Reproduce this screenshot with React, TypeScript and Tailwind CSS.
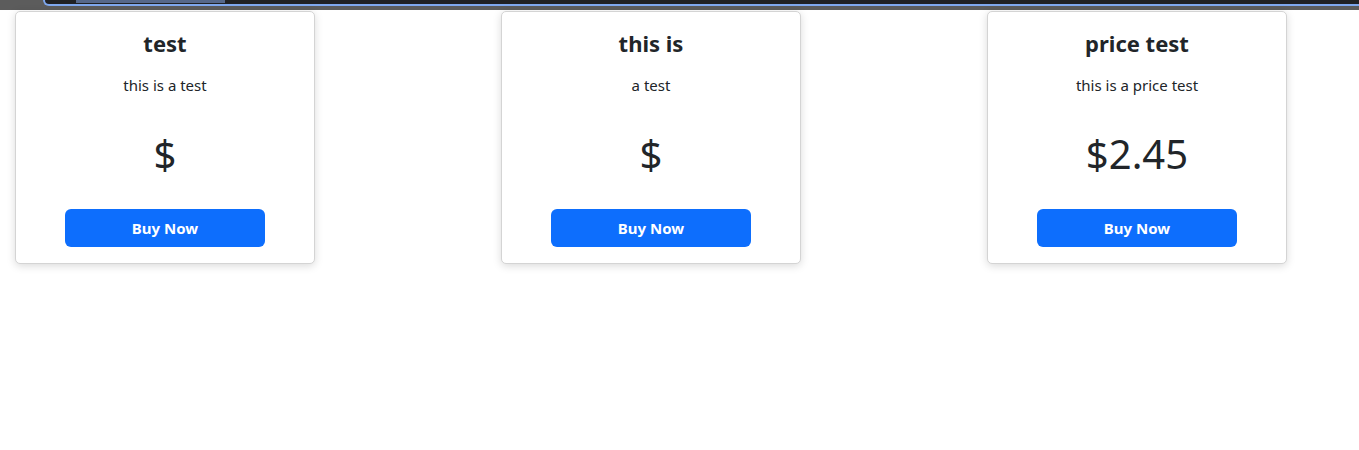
import React from 'react';

type Product = { title: string, description: string, price: string };

const products: Product[] = [
    { title: 'test', description: 'this is a test', price: '' },
    { title: 'this is', description: 'a test', price: '' },
    { title: 'price test', description: 'this is a price test', price: '2.45' },
];

const TopStrip = () => (
    <div className="flex h-[10px] bg-[#5c5c5c]">
        <div className="w-[43px] shrink-0" />
        <div className="flex-1 h-[6px] bg-[#202124] border-b-2 border-l-2 border-[#7fa8ee] rounded-bl-[12px]">
            <div className="ml-[31px] w-[149px] h-[3px] bg-[#56688a]" />
        </div>
    </div>
);

const ProductCard: React.FC<{ product: Product }> = ({ product }) => (
    <div className="w-[300px] shrink-0 flex flex-col items-center bg-white border border-[#d4d4d4] rounded-[5px] shadow-[0_2px_8px_rgba(0,0,0,0.15)] pt-[18px] pb-[16px]">
        <h2 className="text-[22px] leading-[26px] font-bold text-[#212529]">{product.title}</h2>
        <p className="mt-[18px] text-[15px] leading-[22px] text-[#212529]">{product.description}</p>
        <div className="mt-[34px] text-[40px] leading-[48px] text-[#212529]">${product.price}</div>
        <button className="mt-[31px] w-[200px] h-[38px] rounded-[6px] bg-[#0d6efd] text-white text-[15px] font-bold">
            Buy Now
        </button>
    </div>
);

export default function App() {
    return (
        <div className="min-h-[450px] bg-white" style={{ fontFamily: '"Noto Sans", "Open Sans", sans-serif' }}>
            <TopStrip />
            <div className="flex gap-[186px] pl-[15px] mt-[1px]">
                {products.map((p, i) => <ProductCard key={i} product={p} />)}
            </div>
        </div>
    );
}
